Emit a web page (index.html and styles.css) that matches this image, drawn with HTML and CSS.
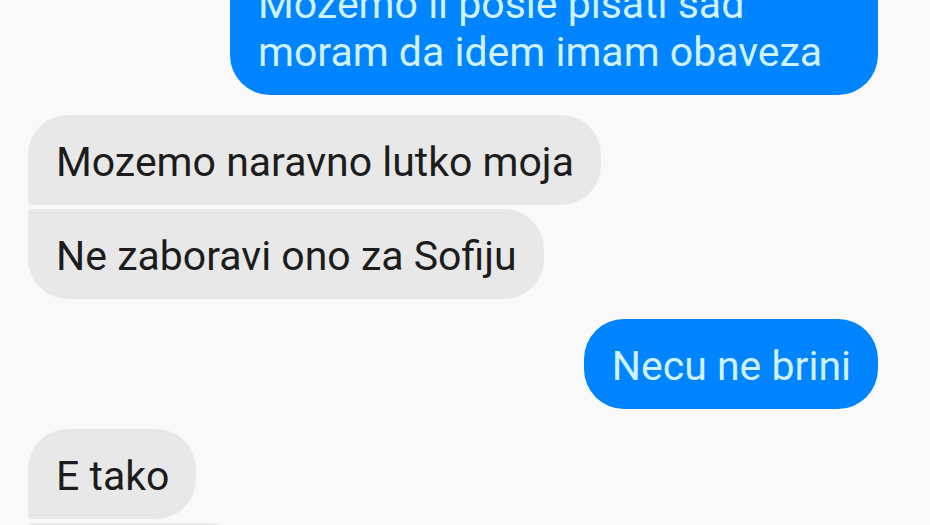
FILE: index.html
```
<!DOCTYPE html>
<html lang="sr-Latn">
<head>
  <meta charset="UTF-8">
  <meta name="viewport" content="width=device-width, initial-scale=1.0">
  <title>Chat</title>
  <link rel="stylesheet" href="styles.css">
</head>
<body>
  <main class="chat">
    <div class="group sent">
      <p class="bubble cut-top">Mozemo li posle pisati sad moram da idem imam obaveza</p>
    </div>
    <div class="group received">
      <p class="bubble first">Mozemo naravno lutko moja</p>
      <p class="bubble last">Ne zaboravi ono za Sofiju</p>
    </div>
    <div class="group sent">
      <p class="bubble">Necu ne brini</p>
    </div>
    <div class="group received">
      <p class="bubble first">E tako</p>
      <p class="bubble last pending"></p>
    </div>
  </main>
</body>
</html>
```
FILE: styles.css
```
* {
  box-sizing: border-box;
}

body {
  margin: 0;
  background-color: #f9f9f9;
  font-family: Roboto, sans-serif;
}

.chat {
  display: flex;
  flex-direction: column;
  gap: 20px;
  height: 100vh;
  overflow: hidden;
  padding: 0 52px 0 28px;
}

.group {
  display: flex;
  flex-direction: column;
  flex-shrink: 0;
  gap: 4px;
}

.sent {
  align-items: flex-end;
}

.received {
  align-items: flex-start;
}

.bubble {
  margin: 0;
  padding: 23px 27px 19px 28px;
  max-width: 648px;
  border-radius: 40px;
  font-size: 41px;
  line-height: 48px;
}

.sent .bubble {
  background-color: #0084ff;
  color: #d0f2ff;
}

.received .bubble {
  background-color: #e8e8e8;
  color: #1c1c1c;
}

.received .first {
  border-bottom-left-radius: 4px;
}

.received .last {
  border-top-left-radius: 4px;
}

/* scrolled partly out of view */
.sent .cut-top {
  padding-top: 0;
  margin-top: -20px;
  border-top-right-radius: 0;
  border-top-left-radius: 0;
}

.received .pending {
  width: 220px;
  height: 90px;
}
```
